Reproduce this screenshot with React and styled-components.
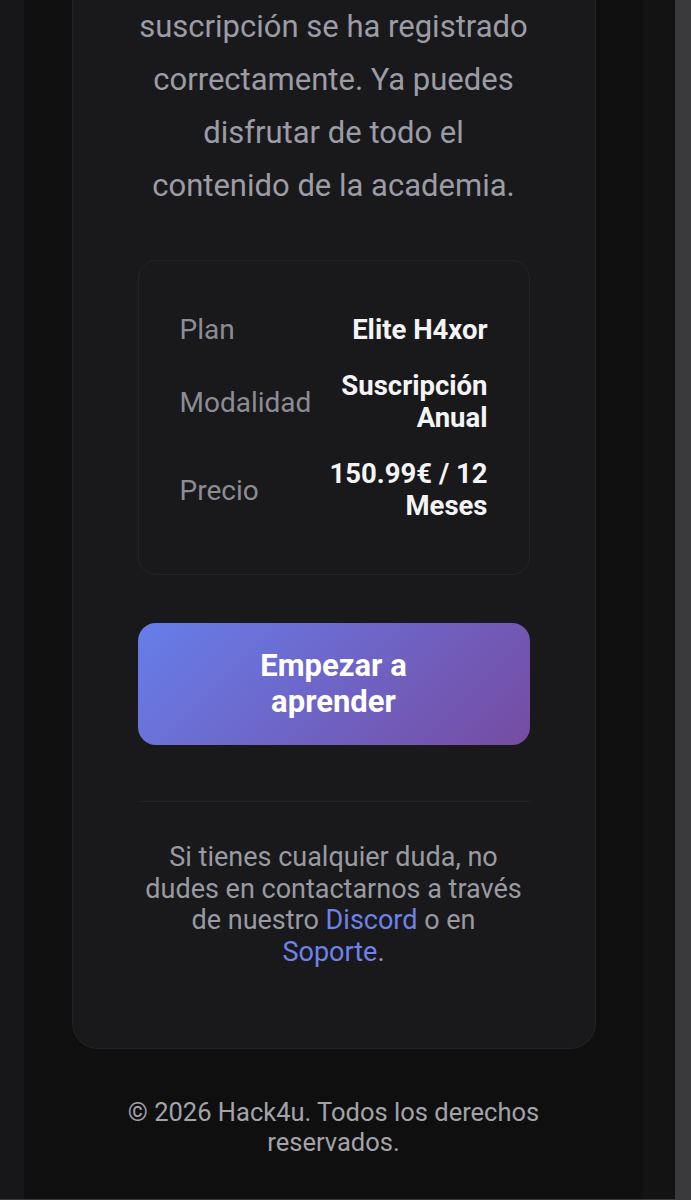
import React from 'react';
import styled, { createGlobalStyle } from 'styled-components';

const GlobalStyle = createGlobalStyle`
  html, body {
    margin: 0;
    padding: 0;
    background: #0f0f10;
  }
  * {
    box-sizing: border-box;
  }
`;

const Frame = styled.div`
  display: flex;
  min-height: 1200px;
  font-family: Roboto, "Noto Sans", sans-serif;
  border-bottom: 1px solid #3a3a3c;
`;

const Gutter = styled.div`
  width: ${(p) => p.$width}px;
  flex-shrink: 0;
  background: ${(p) => p.$color};
`;

const Main = styled.main`
  flex: 1;
  display: flex;
  flex-direction: column;
  align-items: center;
  background: #0f0f10;
`;

const Card = styled.section`
  width: 524px;
  background: #19191b;
  border: 1px solid #232326;
  border-top: none;
  border-radius: 0 0 26px 26px;
  padding: 0 65px 80px;
  display: flex;
  flex-direction: column;
`;

const Lead = styled.p`
  margin: 0 0 48px;
  text-align: center;
  font-size: 31px;
  line-height: 53px;
  color: #9c9ca6;
`;

const Details = styled.div`
  border: 1px solid #242427;
  border-radius: 18px;
  padding: 40px 41px;
  display: flex;
  flex-direction: column;
`;

const Row = styled.div`
  display: flex;
  align-items: center;
  justify-content: space-between;
  gap: 16px;
  padding: 12px 0;
`;

const Label = styled.span`
  flex-shrink: 0;
  font-size: 28px;
  color: #8c8c95;
`;

const Value = styled.span`
  text-align: right;
  font-size: 27.5px;
  line-height: 32px;
  font-weight: 700;
  color: #f4f4f6;
`;

const StartButton = styled.button`
  margin-top: 48px;
  height: 122px;
  border: none;
  border-radius: 18px;
  background: linear-gradient(135deg, #667eea 0%, #764ba2 100%);
  color: #fff;
  font-family: inherit;
  font-size: 31px;
  line-height: 36px;
  font-weight: 700;
  padding: 0 100px;
  cursor: pointer;
`;

const Divider = styled.hr`
  margin: 56px 0 40px;
  border: none;
  border-top: 1px solid #232326;
`;

const Support = styled.p`
  margin: 0;
  text-align: center;
  font-size: 27px;
  line-height: 31.5px;
  color: #9a9aa2;
  padding: 0 6px;
`;

const Link = styled.a`
  color: #6f82ea;
  text-decoration: none;
`;

const Footer = styled.footer`
  margin-top: 48px;
  width: 430px;
  text-align: center;
  font-size: 25.5px;
  line-height: 30px;
  color: #a3a3a9;
`;

const details = [
  { label: 'Plan', value: 'Elite H4xor' },
  { label: 'Modalidad', value: 'Suscripción Anual' },
  { label: 'Precio', value: '150.99€ / 12 Meses' },
];

const App = () => {
  return (
    <>
      <GlobalStyle />
      <Frame>
        <Gutter $width={24} $color="#171719" />
        <Main>
          <Card>
            <Lead>
              suscripción se ha registrado correctamente. Ya puedes disfrutar de todo el
              contenido de la academia.
            </Lead>
            <Details>
              {details.map((d) => (
                <Row key={d.label}>
                  <Label>{d.label}</Label>
                  <Value>{d.value}</Value>
                </Row>
              ))}
            </Details>
            <StartButton>Empezar a aprender</StartButton>
            <Divider />
            <Support>
              Si tienes cualquier duda, no dudes en contactarnos a través de nuestro{' '}
              <Link href="#">Discord</Link> o en <Link href="#">Soporte</Link>.
            </Support>
          </Card>
          <Footer>© 2026 Hack4u. Todos los derechos reservados.</Footer>
        </Main>
        <Gutter $width={32} $color="#131314" />
        <Gutter $width={16} $color="#3a3a3c" />
      </Frame>
    </>
  );
};

export default App;
